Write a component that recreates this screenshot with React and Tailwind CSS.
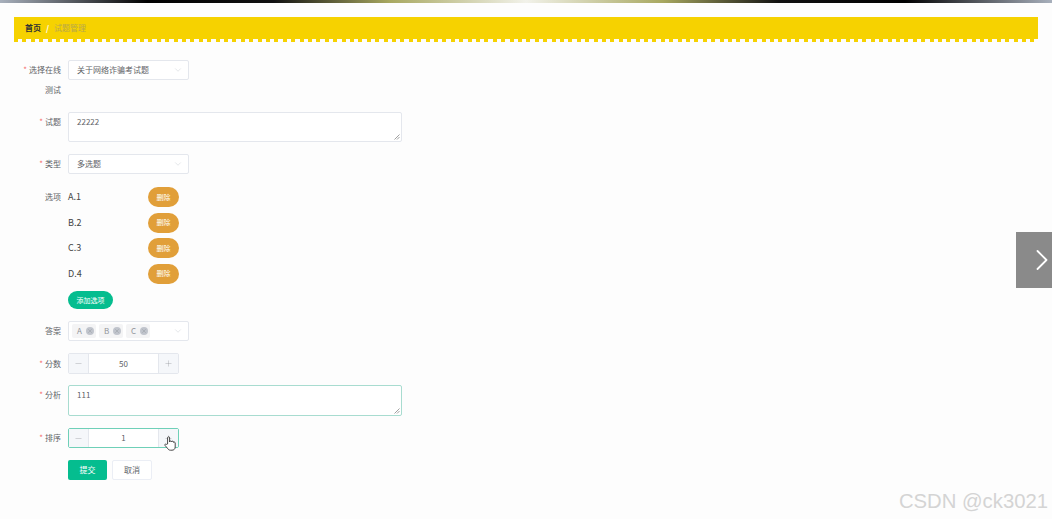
import React from 'react'
import { ChevronDown, ChevronRight, Minus, Plus, X } from 'lucide-react'

const font = { fontFamily: '"Noto Sans CJK SC", "Noto Sans", sans-serif' }

function Label({ text, required, className = 'leading-[20px]' }) {
  return (
    <div className={`w-[47px] shrink-0 pl-[8px] text-right text-[8px] text-[#606266] ${className}`}>
      {required && <span className="mr-[2px] text-[#f56c6c]">*</span>}
      {text}
    </div>
  )
}

function Select({ value }) {
  return (
    <div className="flex h-[20px] w-[121px] items-center justify-between rounded-[2px] border border-[#e4e7ed] bg-white pl-[8px] pr-[5px] text-[8px] text-[#606266]">
      <span>{value}</span>
      <ChevronDown size={10} strokeWidth={1} className="text-[#c0c4cc]" />
    </div>
  )
}

function Area({ value, active }) {
  return (
    <div className={`relative w-[334px] rounded-[2px] border bg-white px-[8px] pt-[2px] text-[8px] leading-[14px] text-[#606266] ${active ? 'h-[31px] border-[#a8dcd0]' : 'h-[30px] border-[#e4e7ed]'}`}>
      {value}
      <svg className="absolute bottom-[1px] right-[1px]" width="6" height="6" viewBox="0 0 6 6">
        <path d="M0.5 5.5 L5.5 0.5 M3 5.5 L5.5 3" stroke="#777" strokeWidth="0.7" />
      </svg>
    </div>
  )
}

function Stepper({ value, active, height }) {
  return (
    <div className={`flex w-[111px] rounded-[2px] border bg-white text-[8px] text-[#606266] ${height} ${active ? 'border-[#6fd0b8]' : 'border-[#e4e7ed]'}`}>
      <div className="flex w-[20px] items-center justify-center border-r border-[#e4e7ed] bg-[#f5f7fa] text-[#909399]">
        <Minus size={9} strokeWidth={1} />
      </div>
      <div className="flex flex-1 items-center justify-center">{value}</div>
      <div className="flex w-[20px] items-center justify-center border-l border-[#e4e7ed] bg-[#f5f7fa] text-[#909399]">
        <Plus size={9} strokeWidth={1} />
      </div>
    </div>
  )
}

function Option({ text }) {
  return (
    <div className="flex h-[20px] items-center">
      <span className="w-[80px] text-[9px] text-[#444]">{text}</span>
      <button className="h-[20px] w-[31px] rounded-[10px] bg-[#e19f39] text-[7px] text-white">删除</button>
    </div>
  )
}

function Tag({ text }) {
  return (
    <span className="flex h-[14px] w-[24px] items-center justify-between rounded-[2px] bg-[#f4f4f5] pl-[5px] pr-[2px] text-[8px] text-[#909399]">
      {text}
      <span className="flex h-[8px] w-[8px] items-center justify-center rounded-full bg-[#c0c4cc] text-[#8a8d93]">
        <X size={6} strokeWidth={1.5} />
      </span>
    </span>
  )
}

export default function App() {
  return (
    <div className="relative h-[519px] w-[1052px] overflow-hidden bg-[#fdfdfd]" style={font}>
      <div className="h-[3px] bg-[linear-gradient(90deg,#a8b0bc_0%,#000_14%,#111_26%,#a8a860_37%,#f2f2ea_50%,#a8a860_63%,#111_74%,#000_86%,#a8b0bc_100%)]" />

      <div className="mx-[14px] mt-[14px]">
        <div className="flex h-[22px] items-center bg-[#f6d200] pl-[11px] text-[8px]">
          <span className="font-bold text-[#303133]">首页</span>
          <span className="mx-[5px] font-bold text-white">/</span>
          <span className="text-[#b9a94a]">试题管理</span>
        </div>
        <div className="h-[3px] bg-[repeating-linear-gradient(90deg,#f6d200_0_4px,transparent_4px_8.4px)]" />
      </div>

      <div className="mt-[18px] flex flex-col pl-[14px]">
        <div className="flex gap-[7px]">
          <Label required text="选择在线测试" />
          <Select value="关于网络诈骗考试题" />
        </div>

        <div className="mt-[12px] flex gap-[7px]">
          <Label required text="试题" />
          <Area value="22222" />
        </div>

        <div className="mt-[12px] flex gap-[7px]">
          <Label required text="类型" />
          <Select value="多选题" />
        </div>

        <div className="mt-[13px] flex gap-[7px]">
          <Label text="选项" />
          <div className="flex flex-col gap-[5.5px]">
            <Option text="A.1" />
            <Option text="B.2" />
            <Option text="C.3" />
            <Option text="D.4" />
            <button className="mt-[2px] h-[18px] w-[45px] rounded-[9px] bg-[#05bd8f] text-[7px] text-white">添加选项</button>
          </div>
        </div>

        <div className="mt-[12px] flex gap-[7px]">
          <Label text="答案" />
          <div className="flex h-[20px] w-[121px] items-center justify-between rounded-[2px] border border-[#e4e7ed] bg-white pl-[3px] pr-[5px]">
            <div className="flex gap-[3px]">
              <Tag text="A" />
              <Tag text="B" />
              <Tag text="C" />
            </div>
            <ChevronDown size={10} strokeWidth={1} className="text-[#c0c4cc]" />
          </div>
        </div>

        <div className="mt-[12px] flex gap-[7px]">
          <Label required text="分数" className="leading-[21px]" />
          <Stepper value="50" height="h-[21px]" />
        </div>

        <div className="mt-[11px] flex gap-[7px]">
          <Label required text="分析" />
          <Area value="111" active />
        </div>

        <div className="mt-[12px] flex gap-[7px]">
          <Label required text="排序" />
          <div className="relative">
            <Stepper value="1" active height="h-[20px]" />
            <svg className="absolute left-[96px] top-[8px]" width="12" height="15" viewBox="0 0 12 15">
              <path d="M3.6 8 V1.8 a1 1 0 0 1 2 0 V6 a1 1 0 0 1 2 0 a1 1 0 0 1 2 0.4 a0.9 0.9 0 0 1 1.6 0.6 V11 c0 2 -1.4 3.2 -3.2 3.2 H6.4 c-1.4 0 -2.2 -0.8 -3 -2 L1 9.4 c-0.6 -1 0.6 -1.8 1.4 -1 Z" fill="#fff" stroke="#333" strokeWidth="0.9" />
            </svg>
          </div>
        </div>

        <div className="mt-[12px] flex gap-[5px] pl-[54px]">
          <button className="h-[20px] w-[39px] rounded-[2px] bg-[#05bd8f] text-[8px] text-white">提交</button>
          <button className="h-[20px] w-[40px] rounded-[2px] border border-[#ebeef5] bg-white text-[8px] text-[#606266]">取消</button>
        </div>
      </div>

      <div className="absolute left-[1016px] top-[232px] flex h-[56px] w-[36px] items-center justify-end bg-[#8a8a8a] text-white">
        <ChevronRight size={36} strokeWidth={1.2} className="mr-[-8px]" />
      </div>

      <div className="absolute right-[4px] top-[486px] text-[20.3px] text-[#d4d4d4]" style={{ fontFamily: '"Liberation Sans", sans-serif' }}>
        CSDN @ck3021
      </div>
    </div>
  )
}
